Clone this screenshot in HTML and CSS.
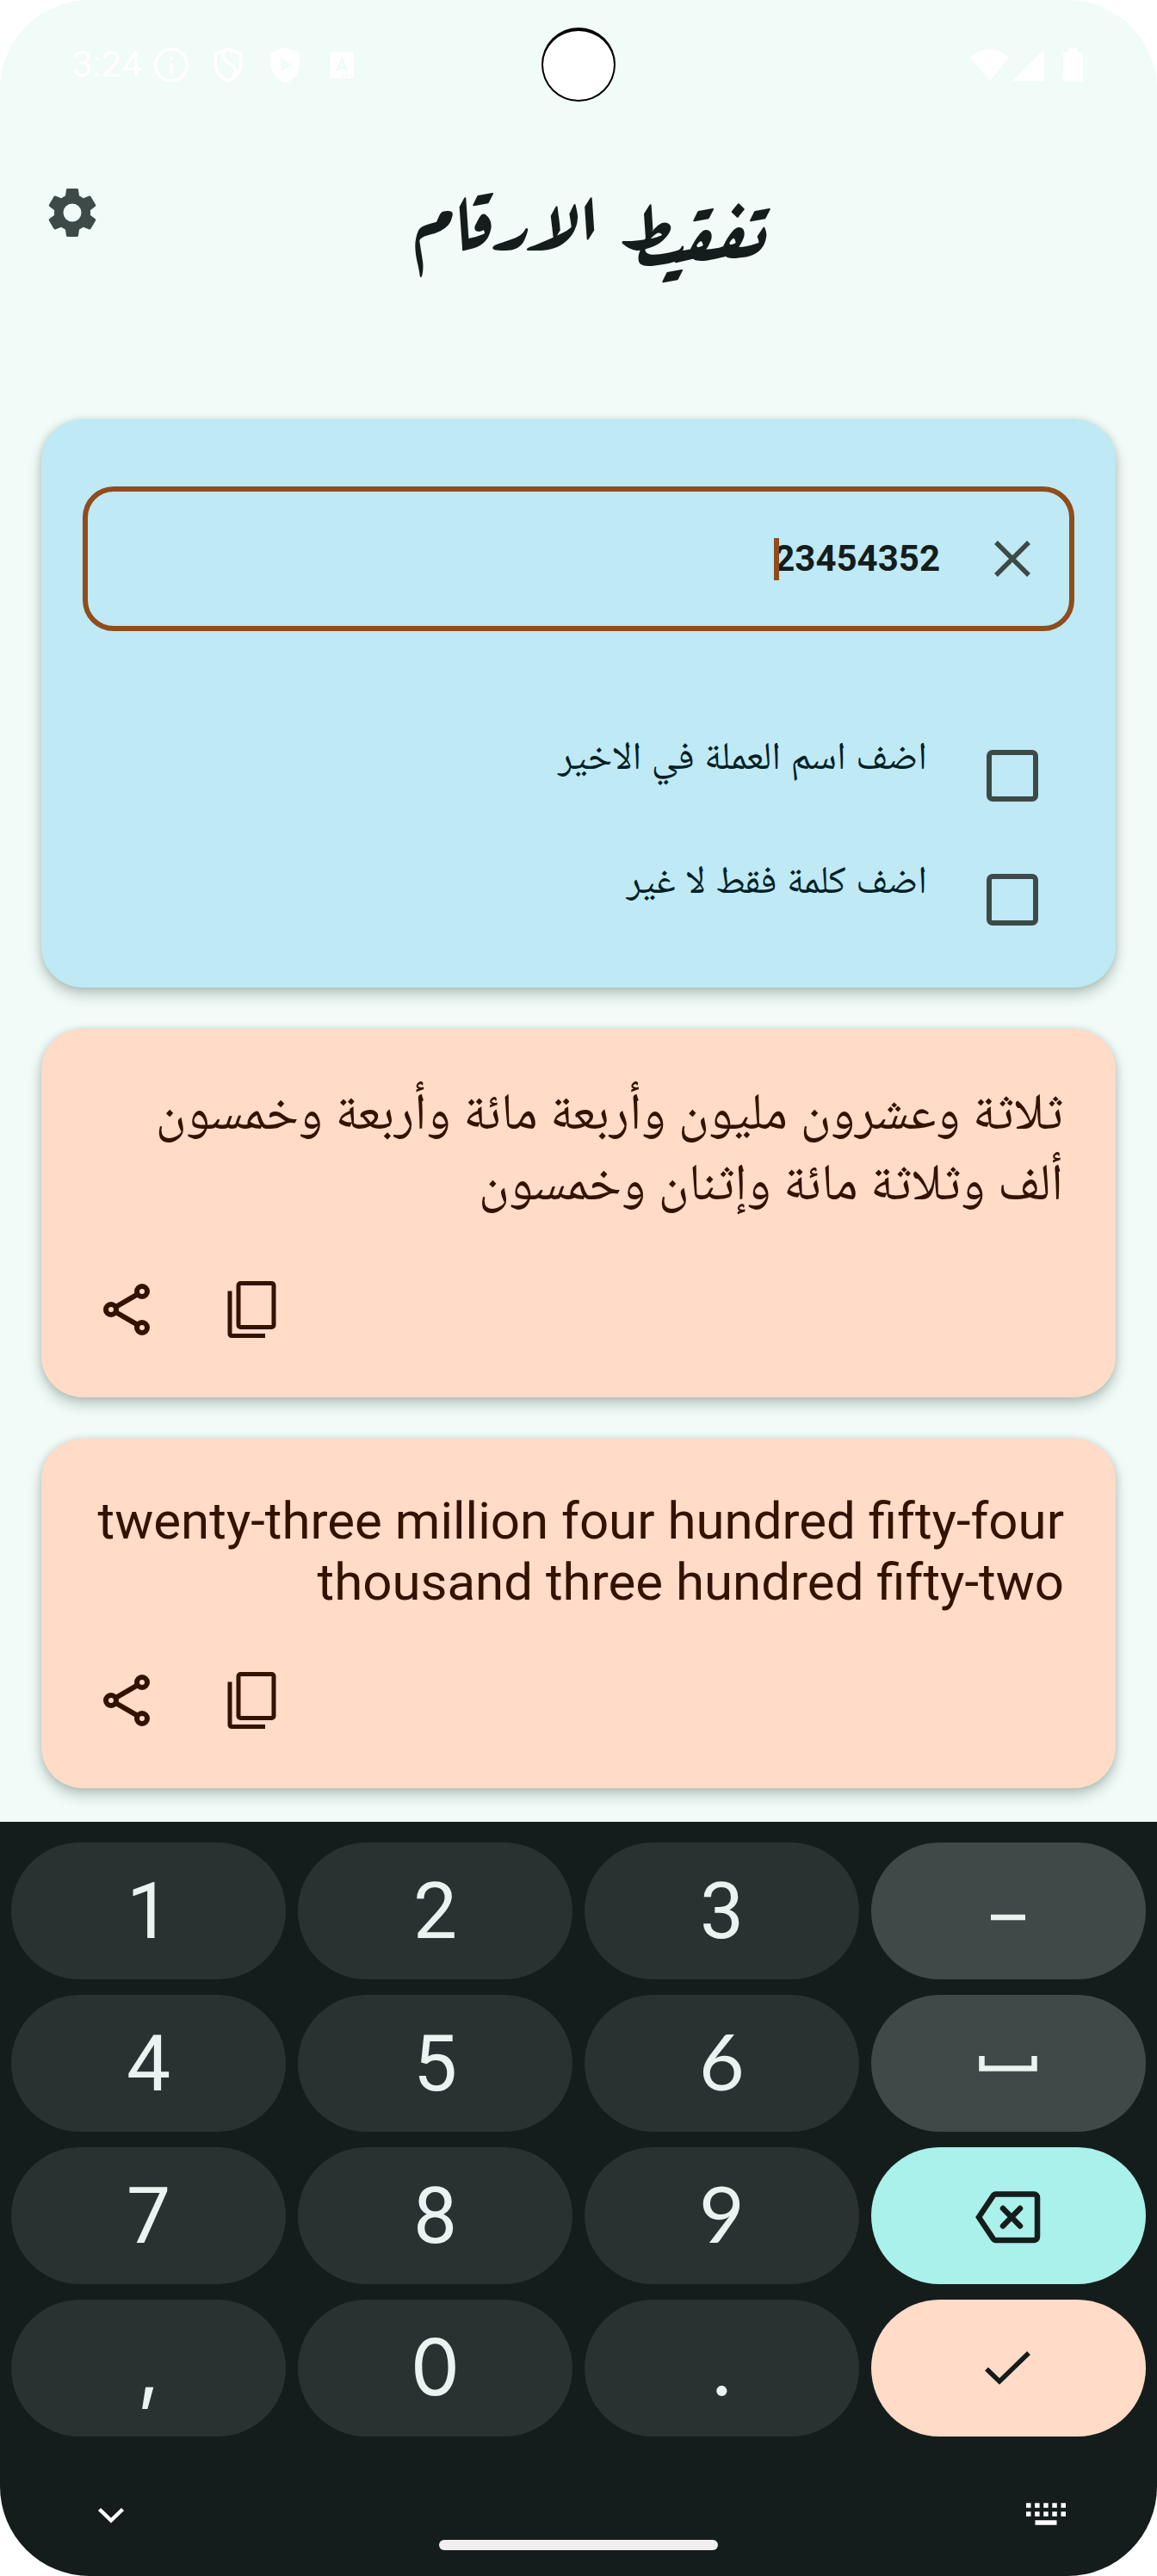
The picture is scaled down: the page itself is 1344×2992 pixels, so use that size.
FILE: index.html
```html
<!DOCTYPE html>
<html lang="ar">
<head>
<meta charset="utf-8">
<title>تفقيط الارقام</title>
<link rel="stylesheet" href="styles.css">
</head>
<body>
<div class="screen">
  <header class="status">
    <span class="time">3:24</span>
    <svg class="st-left" width="236" height="46" viewBox="0 0 236 46">
      <circle cx="20" cy="22.500" r="18.300" fill="none" stroke="#fff" stroke-width="3.800"/>
      <path d="M18 12.500h4v4h-4zM18 20.500h4v12h-4z" fill="#fff"/>
      <path d="M86 4.200l14.700 5.200v11c0 9-5.500 16.500-14.700 20.500-9.200-4-14.700-11.500-14.700-20.500v-11zM79.500 7c-1 14 14.500 13 14.500 22 0 3-1 5-2.500 7" fill="none" stroke="#fff" stroke-width="4"/>
      <path fill-rule="evenodd" d="M152.300 2l16.700 6v14c0 10-7 18-16.700 21.500-9.700-3.500-16.800-11.500-16.800-21.500V8zM147 14v16l13.500-8z" fill="#fff"/>
      <path d="M206 7h24a2 2 0 0 1 2 2v27a2 2 0 0 1-2 2h-24a2 2 0 0 1-2-2V9a2 2 0 0 1 2-2z" fill="#fff"/>
      <path d="M212.500 29.500L218 15.500 223.500 29.500M214.500 25.500h7" fill="none" stroke="#f1fbf8" stroke-width="3"/>
      <path d="M218.500 34.500h2.500M223 34.500h2.500M227.500 34.500h2.500" stroke="#f1fbf8" stroke-width="2"/>
    </svg>
    <svg class="st-right" width="134" height="42" viewBox="0 0 134 42">
      <path d="M0 12C12-1 33-1 45 12L22.500 39zM49 39L86 2v37zM114 1h10v4h4a3 3 0 0 1 3 3v29a3 3 0 0 1-3 3h-17a3 3 0 0 1-3-3V8a3 3 0 0 1 3-3h3z" fill="#fff"/>
    </svg>
    <i class="camera"></i>
  </header>

  <div class="appbar">
    <svg class="gear" width="70" height="70" viewBox="0 0 24 24"><path d="M19.140 12.940c.04-.3.060-.61.060-.94s-.02-.64-.07-.94l2.030-1.580a.49.490 0 0 0 .12-.61l-1.920-3.320a.488.488 0 0 0-.59-.22l-2.390.96c-.5-.38-1.030-.7-1.620-.94l-.36-2.540a.484.484 0 0 0-.48-.41h-3.840c-.24 0-.43.170-.47.410l-.36 2.540c-.59.240-1.130.570-1.620.940l-2.390-.96c-.22-.08-.47 0-.59.220L2.740 8.870c-.12.210-.08.470.12.610l2.030 1.580c-.05.3-.09.630-.09.940s.02.640.070.940l-2.030 1.580a.49.490 0 0 0-.12.610l1.920 3.320c.12.220.370.290.590.220l2.390-.96c.5.380 1.030.7 1.620.940l.36 2.540c.05.240.240.410.480.410h3.840c.24 0 .44-.17.470-.41l.36-2.540c.59-.24 1.130-.56 1.620-.94l2.390.960c.22.080.470 0 .59-.22l1.920-3.320c.12-.22.070-.47-.12-.61zM12 15.600a3.600 3.600 0 1 1 0-7.200 3.600 3.600 0 0 1 0 7.200z" fill="#3d4a47"/></svg>
    <h1 class="title" dir="rtl">تفقيط الارقام</h1>
  </div>

  <main class="cards">
    <section class="card entry" dir="rtl">
      <div class="field">
        <svg width="42" height="42" viewBox="0 0 42 42"><path d="M2 2L40 40M40 2L2 40" stroke="#3d4a47" stroke-width="5.500"/></svg>
        <span class="value">23454352<i class="caret"></i></span>
      </div>
      <label class="option"><i class="box"></i><span class="opt">اضف اسم العملة في الاخير</span></label>
      <label class="option"><i class="box"></i><span class="opt">اضف كلمة فقط لا غير</span></label>
    </section>

    <section class="card result arabic">
      <p class="words-ar" dir="rtl">ثلاثة وعشرون مليون وأربعة مائة وأربعة وخمسون<br>ألف وثلاثة مائة وإثنان وخمسون</p>
      <div class="actions">
        <svg width="72" height="72" viewBox="0 0 24 24" fill="none" stroke="#331200" stroke-width="2"><circle cx="18" cy="5" r="2"/><circle cx="6" cy="12" r="2"/><circle cx="18" cy="19" r="2"/><path d="M7.800 11L16.200 6.100M7.800 13L16.200 17.900"/></svg>
        <svg width="72" height="72" viewBox="0 0 72 72" fill="none" stroke="#331200" stroke-width="5"><rect x="22" y="5.500" width="41" height="51" rx="2.500"/><path d="M12 14.500V64.500a2 2 0 0 0 2 2H53"/></svg>
      </div>
    </section>

    <section class="card result english">
      <p class="words-en">twenty-three million four hundred fifty-four<br>thousand three hundred fifty-two</p>
      <div class="actions">
        <svg width="72" height="72" viewBox="0 0 24 24" fill="none" stroke="#331200" stroke-width="2"><circle cx="18" cy="5" r="2"/><circle cx="6" cy="12" r="2"/><circle cx="18" cy="19" r="2"/><path d="M7.800 11L16.200 6.100M7.800 13L16.200 17.900"/></svg>
        <svg width="72" height="72" viewBox="0 0 72 72" fill="none" stroke="#331200" stroke-width="5"><rect x="22" y="5.500" width="41" height="51" rx="2.500"/><path d="M12 14.500V64.500a2 2 0 0 0 2 2H53"/></svg>
      </div>
    </section>
  </main>

  <div class="keyboard">
    <div class="keys">
      <div class="key">1</div><div class="key">2</div><div class="key">3</div>
      <div class="key fn"><svg class="dash" width="40" height="8" viewBox="0 0 40 8"><path d="M0 4h40" stroke="#e9f3f0" stroke-width="6.500"/></svg></div>
      <div class="key">4</div><div class="key">5</div><div class="key geo">6</div>
      <div class="key fn"><svg width="68" height="18" viewBox="0 0 68 18"><path d="M3.500 0V14.500H64.500V0" fill="none" stroke="#e9f3f0" stroke-width="6.500"/></svg></div>
      <div class="key">7</div><div class="key">8</div><div class="key geo">9</div>
      <div class="key del"><svg width="78" height="66" viewBox="0 0 78 66" fill="none" stroke="#151d1c" stroke-width="6.500"><path d="M25 6.500H69a4 4 0 0 1 4 4V56a4 4 0 0 1-4 4H25a4 4 0 0 1-3.500-2L5 33.200 21.500 8.500A4 4 0 0 1 25 6.500z"/><path d="M33 23L53 43.500M53 23L33 43.500" stroke-linecap="round"/></svg></div>
      <div class="key wide">,</div><div class="key wide">0</div><div class="key wide">.</div>
      <div class="key ok"><svg width="54" height="41" viewBox="0 0 54 41"><path d="M2 21.500L17 36 51 3" fill="none" stroke="#151d1c" stroke-width="5.500"/></svg></div>
    </div>
    <footer class="nav">
      <svg width="32" height="20" viewBox="0 0 32 20"><path d="M2.500 2.500L16 15.500 29.500 2.500" fill="none" stroke="#fff" stroke-width="4.500"/></svg>
      <i class="pill"></i>
      <svg class="kbd" width="46" height="26" viewBox="0 0 46 26"><path d="M0 3h5.500M10.100 3h5.500M20.200 3h5.500M30.300 3h5.500M40.500 3h5.500M0 13h5.500M10.100 13h5.500M20.200 13h5.500M30.300 13h5.500M40.500 13h5.500M10.500 23H35.500" stroke="#fff" stroke-width="5.500"/></svg>
    </footer>
  </div>
</div>
</body>
</html>
```
FILE: styles.css
```css
* { box-sizing: border-box; }
body { margin: 0; background: #fff; font-family: Roboto, "Noto Sans", sans-serif; }
svg { display: block; flex: none; }
i { display: block; }

.screen {
  position: relative;
  width: 1344px;
  height: 2992px;
  border-radius: 104px;
  overflow: hidden;
  background: #f1fbf8;
  display: flex;
  flex-direction: column;
}

/* status bar */
.status { height: 150px; padding: 53px 83px 0 84px; display: flex; color: #fff; }
.time { width: 95px; font-size: 42px; line-height: 44px; }
.st-right { margin: 2px 0 0 auto; }
.camera {
  position: absolute;
  left: 629px;
  top: 32px;
  width: 86px;
  height: 86px;
  border: 2px solid #000;
  border-top-width: 4px;
  border-radius: 50%;
  background: #fff;
}

/* app bar */
.appbar { height: 337px; display: flex; padding-left: 49px; }
.gear { margin-top: 62px; }
.title {
  margin: 37px 0 0 334px;
  width: 440px;
  font: 700 90px/120px "Aref Ruqaa", "Noto Nastaliq Urdu", "DejaVu Sans", sans-serif;
  word-spacing: 14px;
  color: #151d1c;
  white-space: nowrap;
}

/* cards */
.cards { display: flex; flex-direction: column; gap: 48px; padding: 0 48px; height: 1629px; }
.card { flex: none; border-radius: 48px; box-shadow: 0 8px 16px rgba(20, 40, 35, .24), 0 1px 9px rgba(20, 40, 35, .14); }
.entry { height: 660px; padding: 78px 48px 0; background: #bee9f5; }
.field {
  height: 168px;
  border: 6px solid #904c1b;
  border-radius: 36px;
  display: flex;
  align-items: center;
  padding-right: 45px;
  gap: 63px;
  margin-bottom: 102px;
}
.value { font-size: 42px; font-weight: 700; color: #151d1c; line-height: 50px; position: relative; }
.caret { position: absolute; left: 0; top: 1px; width: 6px; height: 49px; background: #904c1b; }
.option { height: 144px; display: flex; padding: 36px 42px 0 0; gap: 69px; }
.box { width: 60px; height: 60px; border: 6px solid #3d4a47; border-radius: 7px; }
.opt { font: 45px/60px "Noto Naskh Arabic", "Noto Sans Arabic", "DejaVu Sans", sans-serif; word-spacing: 1.600px; color: #001f26; white-space: nowrap; margin-top: -17px; }

.result { background: #ffdbc8; color: #331200; padding: 60px; display: flex; flex-direction: column; justify-content: space-between; }
.arabic { height: 428px; padding: 62px 61px 66px 60px; }
.english { height: 406px; padding-bottom: 66px; }
.result p { margin: 0; }
.words-ar { font: 60px/82px "Noto Naskh Arabic", "Noto Sans Arabic", "DejaVu Sans", sans-serif; word-spacing: 1.500px; white-space: nowrap; }
.words-en { font-size: 60px; line-height: 71px; text-align: right; white-space: nowrap; }
.actions { display: flex; gap: 72px; padding-left: 3px; }

/* keyboard */
.keyboard { flex: 1; background: #151d1c; padding: 24px 13px 0; }
.keys { display: grid; grid-template-columns: repeat(4, 1fr); grid-auto-rows: 159px; gap: 18px 13.700px; }
.key {
  background: #293231;
  color: #e9f3f0;
  border-radius: 80px;
  display: flex;
  align-items: center;
  justify-content: center;
  font-size: 91px;
  line-height: 110px;
}
.geo { font-family: Lato, sans-serif; padding-bottom: 8px; }
.wide { font-family: Inter, sans-serif; padding-bottom: 4px; }
.fn { background: #404947; }
.dash { margin-top: 14px; }
.del { background: #a9f1ea; padding-top: 3px; }
.ok { background: #ffdbc8; }
.nav { display: flex; justify-content: space-between; padding: 81px 106px 0 113px; margin: 0 -13px; position: relative; }
.nav > svg { margin-top: 1px; }
.nav > .kbd { margin-top: -4px; }
.pill { position: absolute; left: 510px; top: 120px; width: 324px; height: 12px; border-radius: 6px; background: #f0eeef; }
```
